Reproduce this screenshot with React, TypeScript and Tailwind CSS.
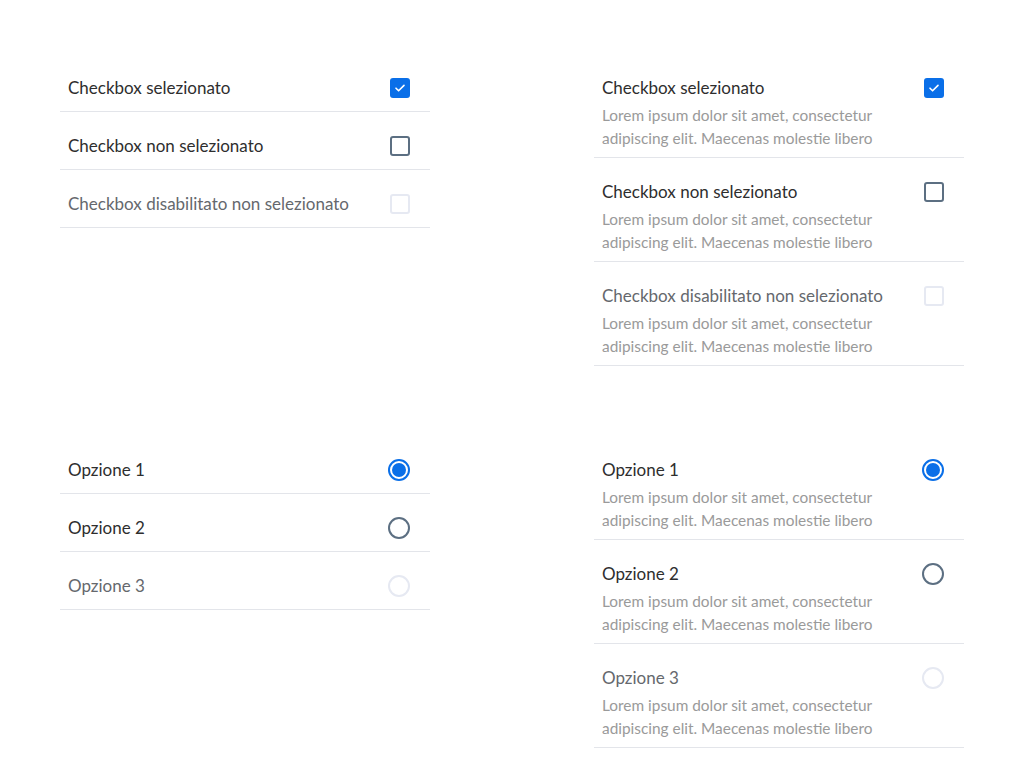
import React from "react";

const desc = "Lorem ipsum dolor sit amet, consectetur adipiscing elit. Maecenas molestie libero";

type State = "checked" | "unchecked" | "disabled";

const checkboxes: { label: string; state: State }[] = [
	{ label: "Checkbox selezionato", state: "checked" },
	{ label: "Checkbox non selezionato", state: "unchecked" },
	{ label: "Checkbox disabilitato non selezionato", state: "disabled" },
];

const radios: { label: string; state: State }[] = [
	{ label: "Opzione 1", state: "checked" },
	{ label: "Opzione 2", state: "unchecked" },
	{ label: "Opzione 3", state: "disabled" },
];

function Checkbox({ state }: { state: State }) {
	if (state === "checked") {
		return (
			<span className="flex h-5 w-5 items-center justify-center rounded-[3px] bg-[#0a6fe8]">
				<svg width="14" height="14" viewBox="0 0 14 14" fill="none">
					<path d="M3 7.2l2.6 2.6L11 4.4" stroke="#fff" strokeWidth="1.6" strokeLinecap="round" strokeLinejoin="round" />
				</svg>
			</span>
		);
	}
	return (
		<span
			className={
				state === "unchecked"
					? "block h-5 w-5 rounded-[3px] border-2 border-[#5c6f82]"
					: "block h-5 w-5 rounded-[3px] border-2 border-[#e6e9f2]"
			}
		/>
	);
}

function Radio({ state }: { state: State }) {
	if (state === "checked") {
		return (
			<span className="flex h-[22px] w-[22px] items-center justify-center rounded-full border-2 border-[#0a6fe8]">
				<span className="block h-[14px] w-[14px] rounded-full bg-[#0a6fe8]" />
			</span>
		);
	}
	return (
		<span
			className={
				state === "unchecked"
					? "block h-[22px] w-[22px] rounded-full border-2 border-[#5c6f82]"
					: "block h-[22px] w-[22px] rounded-full border-2 border-[#e6e9f2]"
			}
		/>
	);
}

function Row({
	label,
	state,
	control,
	withDesc,
}: {
	label: string;
	state: State;
	control: React.ReactNode;
	withDesc?: boolean;
}) {
	return (
		<div
			className={
				withDesc
					? "border-b border-[#e3e5ea] pb-[7px] pl-2 pr-5 pt-5"
					: "border-b border-[#e3e5ea] pb-[9px] pl-2 pr-5 pt-5"
			}
		>
			<div className="flex h-7 items-center justify-between">
				<span
					className={
						state === "disabled"
							? "text-[17px] text-[#65686d]"
							: "text-[17px] text-[#2e2e2e]"
					}
				>
					{label}
				</span>
				{control}
			</div>
			{withDesc && (
				<p className="mt-[2px] w-[290px] text-[15.4px] leading-[23px] text-[#9a9a9a]">
					{desc}
				</p>
			)}
		</div>
	);
}

export default function App() {
	return (
		<div
			className="min-h-screen bg-white px-[60px] pt-[54px]"
			style={{ fontFamily: "Lato, 'Open Sans', sans-serif" }}
		>
			<div className="grid grid-cols-2 items-start gap-x-[164px] gap-y-[70px]">
				<div>
					{checkboxes.map((c) => (
						<Row key={c.label} label={c.label} state={c.state} control={<Checkbox state={c.state} />} />
					))}
				</div>
				<div>
					{checkboxes.map((c) => (
						<Row key={c.label} label={c.label} state={c.state} withDesc control={<Checkbox state={c.state} />} />
					))}
				</div>
				<div>
					{radios.map((r) => (
						<Row key={r.label} label={r.label} state={r.state} control={<Radio state={r.state} />} />
					))}
				</div>
				<div>
					{radios.map((r) => (
						<Row key={r.label} label={r.label} state={r.state} withDesc control={<Radio state={r.state} />} />
					))}
				</div>
			</div>
		</div>
	);
}
